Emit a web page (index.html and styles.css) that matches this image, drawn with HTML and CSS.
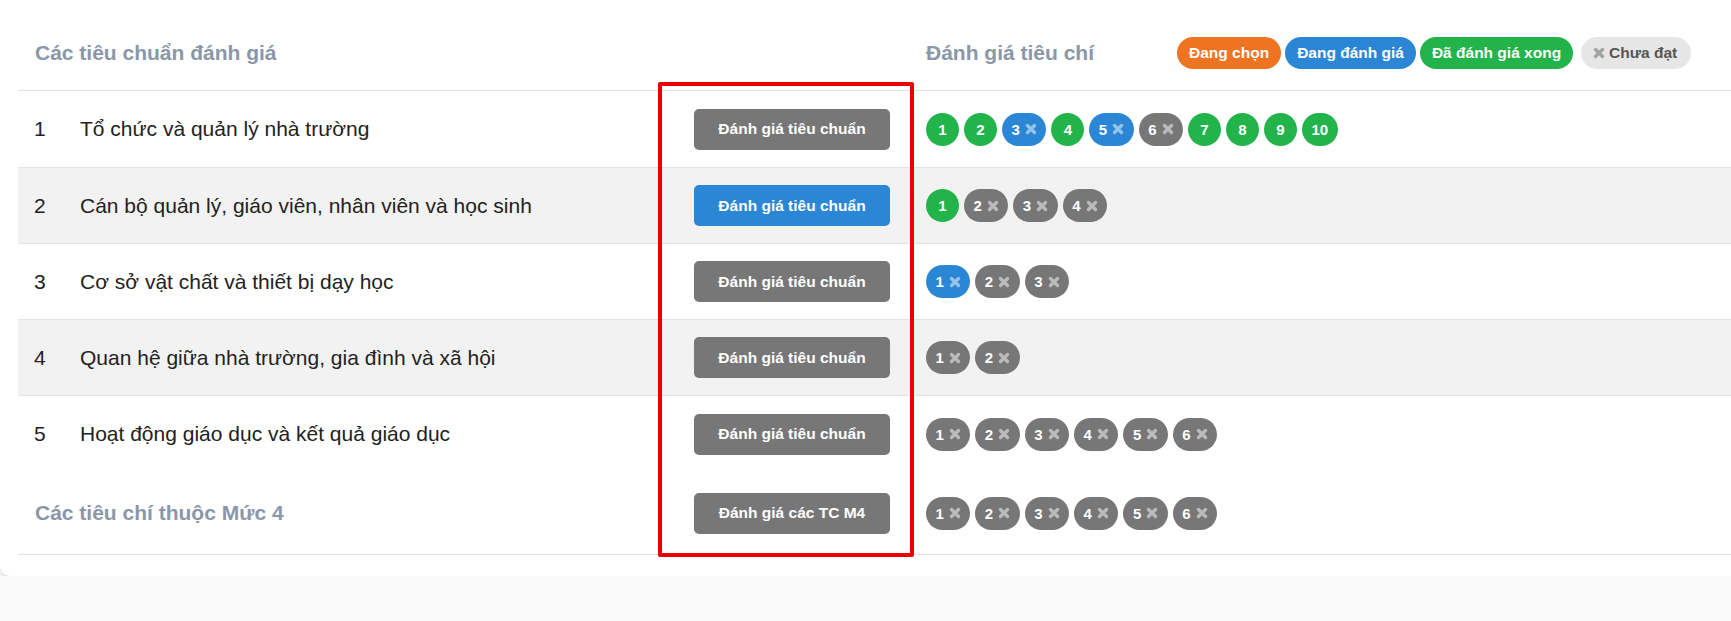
FILE: index.html
```html
<!DOCTYPE html>
<html lang="vi">
<head>
  <meta charset="UTF-8">
  <title>Đánh giá tiêu chuẩn</title>
  <link rel="stylesheet" href="styles.css">
</head>
<body>

  <div class="card">
    <!-- header -->
    <div class="row head">
      <div class="title span3">Các tiêu chuẩn đánh giá</div>
      <div class="crit">
        <span class="title">Đánh giá tiêu chí</span>
        <div class="legend">
          <span class="pill orange">Đang chọn</span>
          <span class="pill blue">Đang đánh giá</span>
          <span class="pill green">Đã đánh giá xong</span>
          <span class="pill light"><svg class="x" viewBox="0 0 12 12"><path d="M2.5 2.5l7 7M9.5 2.5l-7 7"/></svg>Chưa đạt</span>
        </div>
      </div>
    </div>

    <div class="row first">
      <div class="num">1</div>
      <div class="name">Tổ chức và quản lý nhà trường</div>
      <div class="act"><button class="btn">Đánh giá tiêu chuẩn</button></div>
      <div class="crit">
        <span class="badge green">1</span>
        <span class="badge green">2</span>
        <span class="badge blue">3<svg class="x" viewBox="0 0 12 12"><path d="M2.5 2.5l7 7M9.5 2.5l-7 7"/></svg></span>
        <span class="badge green">4</span>
        <span class="badge blue">5<svg class="x" viewBox="0 0 12 12"><path d="M2.5 2.5l7 7M9.5 2.5l-7 7"/></svg></span>
        <span class="badge gray">6<svg class="x" viewBox="0 0 12 12"><path d="M2.5 2.5l7 7M9.5 2.5l-7 7"/></svg></span>
        <span class="badge green">7</span>
        <span class="badge green">8</span>
        <span class="badge green">9</span>
        <span class="badge green">10</span>
      </div>
    </div>

    <div class="row alt">
      <div class="num">2</div>
      <div class="name">Cán bộ quản lý, giáo viên, nhân viên và học sinh</div>
      <div class="act"><button class="btn active">Đánh giá tiêu chuẩn</button></div>
      <div class="crit">
        <span class="badge green">1</span>
        <span class="badge gray">2<svg class="x" viewBox="0 0 12 12"><path d="M2.5 2.5l7 7M9.5 2.5l-7 7"/></svg></span>
        <span class="badge gray">3<svg class="x" viewBox="0 0 12 12"><path d="M2.5 2.5l7 7M9.5 2.5l-7 7"/></svg></span>
        <span class="badge gray">4<svg class="x" viewBox="0 0 12 12"><path d="M2.5 2.5l7 7M9.5 2.5l-7 7"/></svg></span>
      </div>
    </div>

    <div class="row">
      <div class="num">3</div>
      <div class="name">Cơ sở vật chất và thiết bị dạy học</div>
      <div class="act"><button class="btn">Đánh giá tiêu chuẩn</button></div>
      <div class="crit">
        <span class="badge blue">1<svg class="x" viewBox="0 0 12 12"><path d="M2.5 2.5l7 7M9.5 2.5l-7 7"/></svg></span>
        <span class="badge gray">2<svg class="x" viewBox="0 0 12 12"><path d="M2.5 2.5l7 7M9.5 2.5l-7 7"/></svg></span>
        <span class="badge gray">3<svg class="x" viewBox="0 0 12 12"><path d="M2.5 2.5l7 7M9.5 2.5l-7 7"/></svg></span>
      </div>
    </div>

    <div class="row alt">
      <div class="num">4</div>
      <div class="name">Quan hệ giữa nhà trường, gia đình và xã hội</div>
      <div class="act"><button class="btn">Đánh giá tiêu chuẩn</button></div>
      <div class="crit">
        <span class="badge gray">1<svg class="x" viewBox="0 0 12 12"><path d="M2.5 2.5l7 7M9.5 2.5l-7 7"/></svg></span>
        <span class="badge gray">2<svg class="x" viewBox="0 0 12 12"><path d="M2.5 2.5l7 7M9.5 2.5l-7 7"/></svg></span>
      </div>
    </div>

    <div class="row noline">
      <div class="num">5</div>
      <div class="name">Hoạt động giáo dục và kết quả giáo dục</div>
      <div class="act"><button class="btn">Đánh giá tiêu chuẩn</button></div>
      <div class="crit">
        <span class="badge gray">1<svg class="x" viewBox="0 0 12 12"><path d="M2.5 2.5l7 7M9.5 2.5l-7 7"/></svg></span>
        <span class="badge gray">2<svg class="x" viewBox="0 0 12 12"><path d="M2.5 2.5l7 7M9.5 2.5l-7 7"/></svg></span>
        <span class="badge gray">3<svg class="x" viewBox="0 0 12 12"><path d="M2.5 2.5l7 7M9.5 2.5l-7 7"/></svg></span>
        <span class="badge gray">4<svg class="x" viewBox="0 0 12 12"><path d="M2.5 2.5l7 7M9.5 2.5l-7 7"/></svg></span>
        <span class="badge gray">5<svg class="x" viewBox="0 0 12 12"><path d="M2.5 2.5l7 7M9.5 2.5l-7 7"/></svg></span>
        <span class="badge gray">6<svg class="x" viewBox="0 0 12 12"><path d="M2.5 2.5l7 7M9.5 2.5l-7 7"/></svg></span>
      </div>
    </div>

    <!-- level 4 criteria -->
    <div class="row m4">
      <div class="title span2">Các tiêu chí thuộc Mức 4</div>
      <div class="act"><button class="btn">Đánh giá các TC M4</button></div>
      <div class="crit">
        <span class="badge gray">1<svg class="x" viewBox="0 0 12 12"><path d="M2.5 2.5l7 7M9.5 2.5l-7 7"/></svg></span>
        <span class="badge gray">2<svg class="x" viewBox="0 0 12 12"><path d="M2.5 2.5l7 7M9.5 2.5l-7 7"/></svg></span>
        <span class="badge gray">3<svg class="x" viewBox="0 0 12 12"><path d="M2.5 2.5l7 7M9.5 2.5l-7 7"/></svg></span>
        <span class="badge gray">4<svg class="x" viewBox="0 0 12 12"><path d="M2.5 2.5l7 7M9.5 2.5l-7 7"/></svg></span>
        <span class="badge gray">5<svg class="x" viewBox="0 0 12 12"><path d="M2.5 2.5l7 7M9.5 2.5l-7 7"/></svg></span>
        <span class="badge gray">6<svg class="x" viewBox="0 0 12 12"><path d="M2.5 2.5l7 7M9.5 2.5l-7 7"/></svg></span>
      </div>
    </div>

    <!-- highlight frame around the action column -->
    <div class="highlight"></div>
  </div>

</body>
</html>
```

FILE: styles.css
```css
body {
  margin: 0;
  background: #fafafa;
  font-family: "Liberation Sans", Arial, sans-serif;
  color: #222;
  overflow: hidden;
}

.card {
  position: relative;
  margin-top: -20px;
  width: 1780px;
  background: #fff;
  border-radius: 10px;
  box-shadow: 0 2px 4px rgba(0, 0, 0, 0.13);
  padding: 20px 0 21px 18px;
  box-sizing: border-box;
}

.row {
  display: grid;
  grid-template-columns: 62px 584px 252px 1fr;
  align-items: center;
  height: 75px;
  border-bottom: 1px solid #e3e3e3;
}

.row.first {
  height: 76px;
}

.row.alt {
  background: #f2f2f2;
}

.row.noline {
  height: 76px;
  border-bottom: none;
}

.row.m4 {
  height: 82px;
}

.row.head {
  height: 74px;
  padding-top: 16px;
}

.title {
  font-size: 21px;
  font-weight: bold;
  color: #8a97a8;
}

.span3 {
  grid-column: span 3;
  padding-left: 17px;
}

.span2 {
  grid-column: span 2;
  padding-left: 17px;
}

.num {
  padding-left: 16px;
  font-size: 21px;
}

.name {
  font-size: 21px;
}

.act {
  display: flex;
  justify-content: center;
  padding-left: 4px;
}

.btn {
  width: 196px;
  height: 41px;
  border: none;
  border-radius: 5px;
  background: #777;
  color: #fff;
  font-family: inherit;
  font-size: 15.5px;
  font-weight: bold;
  cursor: pointer;
}

.btn.active {
  background: #2b86d5;
}

.crit {
  display: flex;
  align-items: center;
  gap: 5px;
  padding-left: 10px;
}

.legend {
  display: flex;
  gap: 4px;
  margin-left: 78px;
}

.pill {
  display: inline-flex;
  align-items: center;
  height: 32px;
  padding: 0 12px;
  border-radius: 16px;
  color: #fff;
  font-size: 15.5px;
  font-weight: bold;
}

.pill.light {
  margin-left: 4px;
  padding-right: 14px;
  background: #e6e6e6;
  color: #555;
}

.pill.light .x {
  stroke: #a3a3a3;
  margin: 0 4px 0 0;
}

.badge {
  display: inline-flex;
  align-items: center;
  justify-content: center;
  min-width: 33px;
  height: 33px;
  padding: 0 9.5px;
  box-sizing: border-box;
  border-radius: 17px;
  color: #fff;
  font-size: 15px;
  font-weight: bold;
}

.orange { background: #ef7421; }
.blue { background: #2b86d5; }
.green { background: #22b44a; }
.gray { background: #777; }

.x {
  width: 12px;
  height: 12px;
  margin-left: 5px;
  fill: none;
  stroke: rgba(255, 255, 255, 0.5);
  stroke-width: 3.3;
  stroke-linecap: round;
}

.highlight {
  position: absolute;
  left: 658px;
  top: 102px;
  width: 248px;
  height: 467px;
  border: 4px solid #e00;
  border-radius: 2px;
  pointer-events: none;
}
```
